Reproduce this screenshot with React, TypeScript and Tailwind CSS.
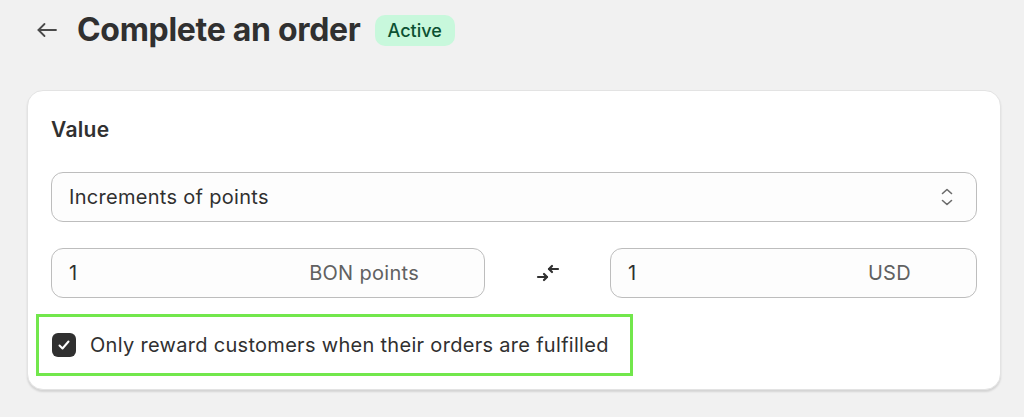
import React from 'react'

function ArrowLeft() {
  return (
    <svg width="24" height="24" viewBox="0 0 24 24" fill="none" stroke="#4a4a4a" strokeWidth="1.8" strokeLinecap="round" strokeLinejoin="round">
      <path d="M21 12H3.5" />
      <path d="M9.5 6L3.5 12L9.5 18" />
    </svg>
  )
}

function SelectIcon() {
  return (
    <svg width="14" height="20" viewBox="0 0 14 20" fill="none" stroke="#6b6b6b" strokeWidth="1.6" strokeLinecap="round" strokeLinejoin="round">
      <path d="M2.5 6.5L7 2.5L11.5 6.5" />
      <path d="M2.5 13.5L7 17.5L11.5 13.5" />
    </svg>
  )
}

function SwapIcon() {
  return (
    <svg width="24" height="22" viewBox="0 0 24 22" fill="none" stroke="#303030" strokeWidth="2.2" strokeLinecap="round" strokeLinejoin="round">
      <path d="M2 15H11" />
      <path d="M8 12L11 15L8 18" />
      <path d="M22 7H13" />
      <path d="M16 4L13 7L16 10" />
    </svg>
  )
}

function CheckIcon() {
  return (
    <svg width="14" height="14" viewBox="0 0 14 14" fill="none" stroke="#ffffff" strokeWidth="2" strokeLinecap="round" strokeLinejoin="round">
      <path d="M2.5 7.5L5.5 10.5L11.5 3.5" />
    </svg>
  )
}

function AmountField({ value, suffix, className }: { value: string; suffix: string; className: string }) {
  return (
    <div className={`flex h-[50px] items-center justify-between rounded-[12px] border border-[#bdbdbd] bg-[#fdfdfd] pl-[17px] pr-[65px] text-[20px] tracking-[0.3px] text-[#303030] ${className}`}>
      <span>{value}</span>
      <span className="text-[#616161]">{suffix}</span>
    </div>
  )
}

export default function App() {
  return (
    <div className="h-[417px] w-[1024px] overflow-hidden bg-[#f1f1f1] font-['Inter',sans-serif] text-[#303030]">
      <div className="flex h-[60px] items-center pl-[35px]">
        <ArrowLeft />
        <h1 className="ml-[18px] text-[32px] font-bold leading-none tracking-[-0.3px] text-[#303030]">Complete an order</h1>
        <span className="ml-[14px] flex h-[31px] items-center rounded-[10px] bg-[#c8f8dc] px-[13px] text-[18px] font-medium text-[#0c5132]">Active</span>
      </div>

      <div className="ml-[27px] mt-[30px] w-[974px] rounded-[16px] border border-[#e3e3e3] bg-white px-[23px] pb-[13px] pt-[25px] shadow-[0_2px_2px_rgba(0,0,0,0.12)]">
        <h2 className="text-[21px] font-semibold leading-[28px] tracking-[0.3px] text-[#303030]">Value</h2>

        <div className="mt-[28px] flex h-[50px] items-center justify-between rounded-[12px] border border-[#bdbdbd] bg-[#fdfdfd] pl-[17px] pr-[22px] text-[20px] tracking-[0.3px]">
          <span>Increments of points</span>
          <SelectIcon />
        </div>

        <div className="mt-[26px] flex items-center">
          <AmountField value="1" suffix="BON points" className="w-[434px]" />
          <div className="flex w-[125px] items-center justify-center">
            <SwapIcon />
          </div>
          <AmountField value="1" suffix="USD" className="flex-1" />
        </div>

        <div className="-ml-[15px] mt-[16px] flex h-[62px] w-[597px] items-center border-[3px] border-[#72e74c] pl-[13px]">
          <span className="flex h-[24px] w-[24px] items-center justify-center rounded-[6px] bg-[#303030]">
            <CheckIcon />
          </span>
          <span className="ml-[14px] text-[20px] tracking-[0.3px] text-[#303030]">Only reward customers when their orders are fulfilled</span>
        </div>
      </div>
    </div>
  )
}
